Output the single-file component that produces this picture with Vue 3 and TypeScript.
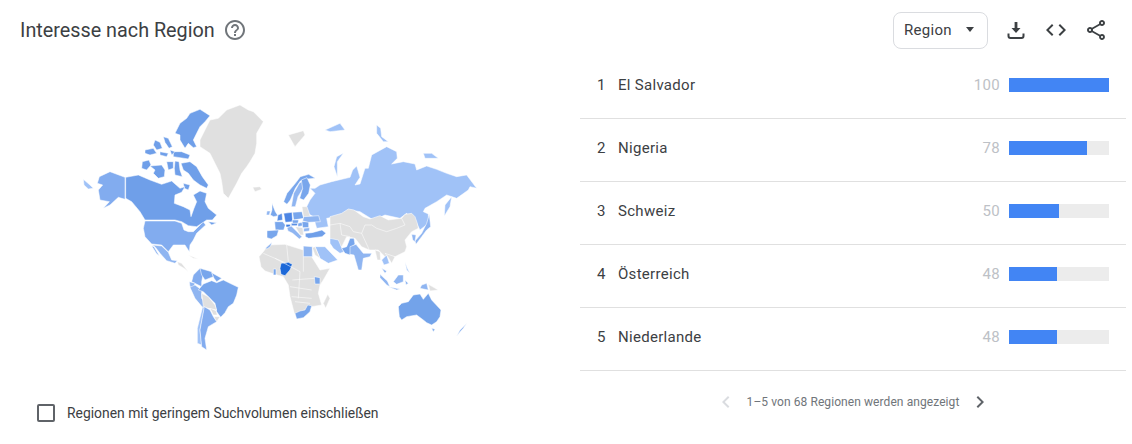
<script setup lang="ts">
interface Row { rank: number; name: string; value: number }
interface Shape { fill: string; pts: string }
interface Layer { x: number; y: number; shapes: Shape[]; lines: string[] }

const rows: Row[] = [
  { rank: 1, name: 'El Salvador', value: 100 },
  { rank: 2, name: 'Nigeria', value: 78 },
  { rank: 3, name: 'Schweiz', value: 50 },
  { rank: 4, name: 'Österreich', value: 48 },
  { rank: 5, name: 'Niederlande', value: 48 },
]

const G = '#e0e0e0'
const C = '#6f9fe9'
const U = '#82acef'
const B = '#78a6ec'
const L = '#8fb5f1'
const R = '#a0c2f7'
const D = '#5a8fe5'

const layers: Layer[] = [
  {
    x: 60, y: 90, lines: [],
    shapes: [
      { fill: G, pts: '420,150 435,120 450,90 475,85 500,60 540,45 565,60 580,65 610,95 590,130 590,160 585,190 570,215 560,230 545,250 530,280 505,325 490,310 485,275 480,250 465,220 450,190 420,170' },
      { fill: G, pts: '578,292 600,290 605,298 585,305' },
      { fill: U, pts: '118,260 150,245 195,262 195,328 175,322 150,345 130,355 148,335 120,330 115,300 128,285 112,280' },
      { fill: R, pts: '70,268 90,285 100,295 85,297 72,285' },
      { fill: U, pts: '255,393 345,393 365,400 372,420 385,425 400,425 430,395 437,405 410,430 400,450 390,465 388,485 375,465 340,465 325,485 305,465 275,462 255,440 250,415' },
      { fill: L, pts: '277,465 305,468 325,487 335,510 352,512 345,520 320,512 300,490 285,470' },
      { fill: L, pts: '275,468 282,470 298,497 290,492' },
      { fill: G, pts: '352,515 365,520 385,545 372,535 355,525' },
      { fill: G, pts: '385,495 415,507 400,505' },
      { fill: U, pts: '400,555 420,535 430,550 425,575 425,590 395,575' },
      { fill: B, pts: '420,535 455,545 460,560 435,570 425,555' },
      { fill: B, pts: '455,548 485,565 470,575 462,565' },
      { fill: L, pts: '388,575 405,580 400,595 390,590' },
      { fill: L, pts: '390,592 405,585 425,600 425,625 445,650 430,655 405,625' },
      { fill: B, pts: '415,600 430,582 455,572 470,578 490,570 510,580 535,592 530,615 520,640 505,650 495,668 482,682 470,665 465,640 445,620 430,605' },
      { fill: G, pts: '425,610 445,620 465,645 470,660 445,655 430,650' },
      { fill: G, pts: '450,655 468,662 472,675 460,675' },
      { fill: G, pts: '462,680 480,680 470,695' },
      { fill: R, pts: '428,650 433,655 420,720 425,765 412,760 412,715' },
      { fill: U, pts: '433,650 450,660 460,680 470,695 445,710 435,745 440,780 425,770 420,720' },
    ],
  },
  {
    x: 125, y: 105, lines: [],
    shapes: [
      { fill: C, pts: '150,85 165,55 185,40 195,25 225,13 255,32 240,50 225,65 215,85 205,105 215,125 205,128 190,115 180,130 165,105 165,90' },
      { fill: C, pts: '115,95 130,100 142,125 132,130 120,112' },
      { fill: C, pts: '90,105 105,112 112,130 95,135 85,120' },
      { fill: C, pts: '60,135 85,130 95,145 75,150 60,145' },
      { fill: C, pts: '145,140 170,140 195,150 190,162 165,158 145,155' },
      { fill: C, pts: '135,135 150,140 140,150' },
      { fill: C, pts: '105,140 130,145 125,155 105,150' },
      { fill: C, pts: '52,170 72,165 78,180 65,195 50,190' },
      { fill: C, pts: '75,183 110,180 120,195 118,215 100,220 85,205 90,195' },
      { fill: C, pts: '125,170 145,170 145,190 130,195' },
      { fill: C, pts: '150,168 162,170 165,195 172,215 150,210 148,190' },
      { fill: C, pts: '168,175 195,170 215,185 232,215 250,240 245,250 225,240 205,225 190,205 175,195' },
      { fill: C, pts: '175,235 195,240 190,255 178,250' },
      { fill: C, pts: '2,217 40,210 75,225 110,238 140,228 165,250 180,245 170,262 150,270 148,295 175,305 195,315 198,335 207,310 215,290 205,270 225,258 245,265 240,290 250,310 275,330 262,345 245,345 215,365 190,362 170,350 150,345 60,345 45,320 20,290 2,280' },
      { fill: C, pts: '250,350 275,353 260,360' },
    ],
  },
  {
    x: 255, y: 235,
    shapes: [
      { fill: G, pts: '12,65 25,50 40,30 90,28 145,45 145,65 170,65 195,105 225,100 205,135 195,150 190,175 200,210 170,215 155,240 130,250 118,235 105,185 100,150 85,125 60,118 30,108 18,95' },
      { fill: '#1c68d8', pts: '75,100 78,85 100,82 112,88 105,105 90,122 78,118' },
      { fill: B, pts: '55,102 63,102 63,120 55,120' },
      { fill: B, pts: '178,125 195,128 195,147 180,147' },
      { fill: B, pts: '120,235 135,228 150,225 158,210 170,212 165,230 145,248 125,252' },
      { fill: L, pts: '145,33 172,35 172,65 145,65' },
      { fill: R, pts: '180,35 210,35 248,75 220,85 195,70' },
      { fill: G, pts: '218,178 225,190 212,220 205,205' },
      { fill: G, pts: '172,38 180,35 195,70 180,60' },
    ],
    lines: ['25,55 95,85', '95,30 100,80', '145,65 145,110', '60,70 135,110', '112,135 178,130', '105,155 170,165', '110,185 170,190', '120,200 165,205', '135,110 130,190'],
  },
  {
    x: 260, y: 90, lines: [],
    shapes: [
      { fill: G, pts: '85,135 130,122 135,135 105,170' },
      { fill: R, pts: '135,365 140,350 150,330 165,310 150,295 165,295 180,285 215,275 270,262 278,240 290,228 300,262 285,285 300,282 315,235 325,235 335,195 380,170 410,185 412,205 395,222 430,215 465,222 470,240 500,228 530,238 560,250 590,260 620,255 650,295 630,290 625,300 590,325 560,315 530,335 495,355 490,365 505,372 505,400 480,420 470,400 440,370 420,385 375,375 340,390 300,365 270,360 240,378 200,385 205,410 170,415 160,380' },
      { fill: R, pts: '268,180 230,200 222,230 232,260 232,215 250,190' },
      { fill: R, pts: '350,105 362,115 365,140 385,155 370,155 350,130' },
      { fill: R, pts: '490,190 515,190 535,205 495,205' },
      { fill: R, pts: '575,320 570,350 553,378 555,345' },
      { fill: R, pts: '195,120 240,100 255,120 210,125' },
      { fill: '#73a3ea', pts: '415,650 425,640 445,635 460,615 480,612 490,628 505,610 515,630 543,660 540,680 530,695 515,705 500,698 490,690 470,675 440,680 425,690 418,680' },
      { fill: '#73a3ea', pts: '515,715 525,718 520,725' },
      { fill: L, pts: '620,700 610,715 590,738 600,720' },
    ],
  },
  {
    x: 330, y: 205,
    shapes: [
      { fill: G, pts: '0,35 35,25 55,12 72,15 100,35 120,42 150,32 175,45 215,40 225,28 245,25 255,35 262,55 265,70 245,80 225,105 230,125 225,140 195,155 165,155 145,135 118,135 95,125 75,100 50,95 35,125 0,100' },
      { fill: R, pts: '0,100 25,105 35,128 42,140 30,145 10,130 0,115' },
      { fill: B, pts: '35,130 50,125 60,100 72,100 75,118 65,125 60,150 45,145' },
      { fill: L, pts: '60,125 78,118 100,145 125,145 120,155 100,160 95,195 85,195 72,150 60,148' },
      { fill: G, pts: '135,135 150,140 152,165 142,165' },
      { fill: R, pts: '155,165 170,150 178,175 162,180' },
      { fill: G, pts: '165,145 195,155 185,175 170,150' },
      { fill: L, pts: '155,190 170,198 180,185 165,205' },
      { fill: R, pts: '225,170 232,190 240,205 230,195' },
      { fill: L, pts: '150,208 172,228 180,245 170,240 150,218' },
      { fill: L, pts: '175,245 210,252 200,255' },
      { fill: L, pts: '190,230 205,210 220,210 220,230 200,238' },
      { fill: L, pts: '225,225 235,235 228,240' },
      { fill: L, pts: '275,240 290,235 295,255 270,250' },
      { fill: G, pts: '295,238 325,255 300,258' },
      { fill: L, pts: '298,28 302,65 290,75 275,95 258,118 255,108 275,85 290,55' },
      { fill: L, pts: '245,88 258,90 255,110 248,105' },
    ],
    lines: ['0,60 30,55 60,65 70,80 95,85 105,60 125,60', '125,60 140,70 170,80 200,70 225,60 215,40', '95,85 118,135', '30,55 35,90 60,95'],
  },
  {
    x: 262, y: 165, lines: [],
    shapes: [
      { fill: B, pts: '65,110 75,85 100,55 115,35 140,28 160,40 135,42 115,48 100,70 85,105 75,118' },
      { fill: L, pts: '88,125 95,85 112,55 122,48 128,62 108,95 100,125' },
      { fill: B, pts: '113,100 122,70 118,45 135,38 145,60 140,85 125,105' },
      { fill: B, pts: '30,115 40,140 48,152 35,155 25,150 30,135' },
      { fill: L, pts: '15,138 25,138 22,150 13,150' },
      { fill: D, pts: '48,150 60,145 62,165 45,168' },
      { fill: '#4c85e4', pts: '65,145 90,142 92,170 70,172' },
      { fill: B, pts: '38,170 62,170 70,180 65,195 40,195' },
      { fill: B, pts: '15,197 50,195 45,212 28,222 15,218' },
      { fill: L, pts: '10,250 30,232 25,245 15,252' },
      { fill: B, pts: '92,142 120,140 125,160 95,165' },
      { fill: G, pts: '120,125 135,125 145,155 125,158' },
      { fill: B, pts: '90,165 110,165 108,175 92,175' },
      { fill: D, pts: '88,175 108,175 105,182 88,182' },
      { fill: '#3f7de0', pts: '72,178 85,178 85,186 72,186' },
      { fill: B, pts: '108,175 120,172 122,182 108,185' },
      { fill: B, pts: '120,170 140,170 140,188 122,188' },
      { fill: L, pts: '125,155 170,152 175,170 140,172 122,168' },
      { fill: L, pts: '75,188 88,183 100,195 120,215 112,222 92,205 78,198' },
      { fill: G, pts: '100,185 122,188 125,210 115,210' },
      { fill: L, pts: '125,190 143,188 142,198 125,200' },
      { fill: C, pts: '130,205 150,203 180,195 192,205 180,215 140,220 130,215' },
    ],
  },
]

function barWidth(value: number): string {
  return `${value}%`
}
</script>

<template>
  <div class="widget">
    <section class="left">
      <header class="title-row">
        <h2 class="title">Interesse nach Region</h2>
        <svg class="help" viewBox="0 0 24 24" width="24" height="24" aria-hidden="true">
          <path d="M11 18h2v-2h-2v2zm1-16C6.48 2 2 6.48 2 12s4.48 10 10 10 10-4.48 10-10S17.52 2 12 2zm0 18c-4.41 0-8-3.59-8-8s3.59-8 8-8 8 3.59 8 8-3.59 8-8 8zm0-14c-2.21 0-4 1.79-4 4h2c0-1.1.9-2 2-2s2 .9 2 2c0 2-3 1.75-3 5h2c0-2.25 3-2.5 3-5 0-2.21-1.79-4-4-4z" />
        </svg>
      </header>
      <svg class="map" viewBox="60 90 430 270" width="430" height="270" role="img" aria-label="Weltkarte">
        <g
          v-for="(layer, li) in layers"
          :key="li"
          :transform="`translate(${layer.x} ${layer.y}) scale(0.33333)`"
          stroke="#fff"
          stroke-width="1.6"
          stroke-linejoin="round"
        >
          <polygon v-for="(s, i) in layer.shapes" :key="i" :points="s.pts" :fill="s.fill" />
          <polyline v-for="(b, i) in layer.lines" :key="'l' + i" :points="b" fill="none" />
        </g>
      </svg>
      <label class="check-row">
        <span class="box"></span>
        <span>Regionen mit geringem Suchvolumen einschließen</span>
      </label>
    </section>

    <section class="right">
      <div class="toolbar">
        <div class="select">
          <span>Region</span>
          <span class="caret"></span>
        </div>
        <button class="icon" aria-label="Herunterladen">
          <svg viewBox="0 0 24 24" width="24" height="24">
            <path d="M10.6 4h2.8v6h3.1L12 15l-4.5-5h3.1z" fill="currentColor" />
            <path d="M4.5 15.5V18a2 2 0 0 0 2 2h11a2 2 0 0 0 2-2v-2.5" fill="none" stroke="currentColor" stroke-width="2" />
          </svg>
        </button>
        <button class="icon" aria-label="Einbetten">
          <svg viewBox="0 0 24 24" width="24" height="24">
            <path d="M9.4 16.6 4.8 12l4.6-4.6L8 6l-6 6 6 6 1.4-1.4zm5.2 0 4.6-4.6-4.6-4.6L16 6l6 6-6 6-1.4-1.4z" fill="currentColor" />
          </svg>
        </button>
        <button class="icon" aria-label="Teilen">
          <svg viewBox="0 0 24 24" width="24" height="24">
            <path d="M18 16.08c-.76 0-1.44.3-1.96.77L8.91 12.7c.05-.23.09-.46.09-.7s-.04-.47-.09-.7l7.05-4.11c.54.5 1.25.81 2.04.81 1.66 0 3-1.34 3-3s-1.34-3-3-3-3 1.34-3 3c0 .24.04.47.09.7L8.04 9.81C7.5 9.31 6.79 9 6 9c-1.66 0-3 1.34-3 3s1.34 3 3 3c.79 0 1.5-.31 2.04-.81l7.12 4.16c-.05.21-.08.43-.08.65 0 1.61 1.31 2.92 2.92 2.92s2.92-1.31 2.92-2.92-1.31-2.92-2.92-2.92zM18 4c.55 0 1 .45 1 1s-.45 1-1 1-1-.45-1-1 .45-1 1-1zM6 13c-.55 0-1-.45-1-1s.45-1 1-1 1 .45 1 1-.45 1-1 1zm12 7.02c-.55 0-1-.45-1-1s.45-1 1-1 1 .45 1 1-.45 1-1 1z" fill="currentColor" />
          </svg>
        </button>
      </div>

      <ul class="rows">
        <li v-for="r in rows" :key="r.rank" class="row">
          <span class="rank">{{ r.rank }}</span>
          <span class="name">{{ r.name }}</span>
          <span class="value">{{ r.value }}</span>
          <span class="track"><span class="fill" :style="{ width: barWidth(r.value) }"></span></span>
        </li>
      </ul>

      <nav class="pager">
        <svg viewBox="0 0 24 24" width="24" height="24" class="prev"><path d="M15.4 7.4 14 6l-6 6 6 6 1.4-1.4L10.8 12z" fill="currentColor" /></svg>
        <span class="pager-text">1–5 von 68 Regionen werden angezeigt</span>
        <svg viewBox="0 0 24 24" width="24" height="24" class="next"><path d="M8.6 16.6 10 18l6-6-6-6-1.4 1.4 4.6 4.6z" fill="currentColor" /></svg>
      </nav>
    </section>
  </div>
</template>

<style scoped>
.widget {
  display: grid;
  grid-template-columns: 580px 552px;
  width: 1132px;
  height: 444px;
  overflow: hidden;
  background: #fff;
  font-family: "Roboto", "Liberation Sans", sans-serif;
  color: #202124;
}
.left {
  display: flex;
  flex-direction: column;
}
.title-row {
  display: flex;
  align-items: center;
  height: 60px;
  padding-left: 20px;
}
.title {
  margin: 0;
  font-size: 19.8px;
  font-weight: 400;
  color: #3c4043;
}
.help {
  margin-left: 8px;
  fill: #70757a;
}
.map {
  display: block;
  margin: 30px 0 0 60px;
}
.check-row {
  display: flex;
  align-items: center;
  gap: 12px;
  margin: 44px 0 0 37px;
  font-size: 13.9px;
  color: #3c4043;
}
.box {
  width: 14px;
  height: 14px;
  border: 2px solid #5f6368;
  border-radius: 2px;
}
.right {
  display: flex;
  flex-direction: column;
  padding-right: 6px;
}
.toolbar {
  display: flex;
  align-items: center;
  justify-content: flex-end;
  gap: 16px;
  height: 56px;
  padding: 4px 18px 0 0;
  box-sizing: border-box;
  color: #3c4043;
}
.select {
  display: flex;
  align-items: center;
  justify-content: space-between;
  box-sizing: border-box;
  width: 95px;
  height: 37px;
  padding: 0 13px 1px 10px;
  border: 1px solid #dadce0;
  border-radius: 8px;
  font-size: 15px;
  letter-spacing: 0.3px;
}
.caret {
  border-left: 4.5px solid transparent;
  border-right: 4.5px solid transparent;
  border-top: 5px solid #3c4043;
}
.icon {
  display: flex;
  width: 24px;
  height: 24px;
  padding: 0;
  border: 0;
  background: none;
  color: #3c4043;
}
.rows {
  margin: 0;
  padding: 0;
  list-style: none;
}
.row {
  display: flex;
  align-items: center;
  box-sizing: border-box;
  height: 63px;
  padding-bottom: 4px;
  border-bottom: 1px solid #e0e0e0;
  font-size: 15px;
  letter-spacing: 0.3px;
  color: #3c4043;
}
.rank {
  width: 24px;
  margin-left: 17px;
  letter-spacing: 0;
}
.name {
  flex: 1;
  margin-left: -3px;
}
.value {
  margin-right: 9px;
  color: #bdc1c6;
}
.track {
  display: block;
  width: 100px;
  height: 14px;
  margin-right: 17px;
  background: #ececec;
}
.fill {
  display: block;
  height: 100%;
  background: #4285f4;
}
.pager {
  display: flex;
  align-items: center;
  justify-content: center;
  margin-top: 21px;
  height: 20px;
  font-size: 12px;
  letter-spacing: 0.08px;
}
.pager-text {
  margin: 0 9px;
  color: #70757a;
}
.prev { color: #dadce0; }
.next { color: #5f6368; }
</style>
